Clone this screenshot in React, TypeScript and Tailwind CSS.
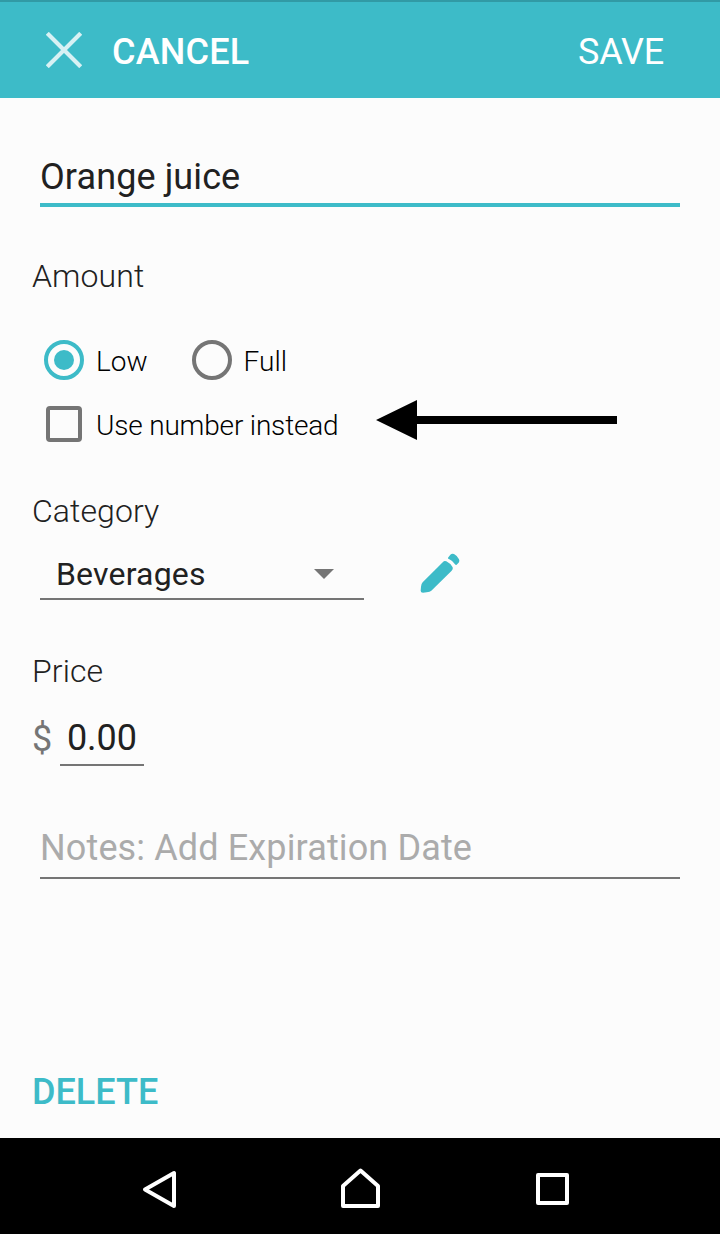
import React, { useState } from 'react';

type Level = 'low' | 'full';

export default function App() {
  const [name, setName] = useState('Orange juice');
  const [level, setLevel] = useState<Level>('low');
  const [useNumber, setUseNumber] = useState(false);
  const [price, setPrice] = useState('0.00');
  const [notes, setNotes] = useState('');

  return (
    <div className="flex h-[1234px] w-[720px] flex-col overflow-hidden bg-[#fcfcfc] font-[Roboto,sans-serif] text-[#212121]">
      <header className="flex h-[98px] shrink-0 items-center border-t-2 border-[#319aa5] bg-[#3dbbc8] pl-[46px] pr-14 text-4xl leading-[40px] text-white">
        <CloseIcon />
        <button className="ml-[30px] mt-[3px] font-medium tracking-[0.2px]">CANCEL</button>
        <button className="ml-auto mt-[3px] tracking-[-0.2px]">SAVE</button>
      </header>

      <main className="flex grow flex-col items-start px-8 pt-[57px]">
        <input
          aria-label="Item name"
          value={name}
          onChange={e => setName(e.target.value)}
          className="mx-2 h-[52px] w-[640px] border-b-4 border-[#3dbbc8] pb-[5px] text-4xl tracking-[0.1px] outline-none"
        />

        <Label className="mt-[49px]">Amount</Label>
        <div className="mt-11 flex items-center gap-11 pl-3">
          <Radio label="Low" checked={level === 'low'} onSelect={() => setLevel('low')} />
          <Radio label="Full" checked={level === 'full'} onSelect={() => setLevel('full')} />
        </div>
        <div className="mt-5 flex h-12 items-center">
          <label className="flex w-[306px] items-center pl-3.5">
            <input type="checkbox" className="sr-only" checked={useNumber} onChange={e => setUseNumber(e.target.checked)} />
            <span className={`size-9 shrink-0 rounded-[4px] border-4 border-[#757575] ${useNumber ? 'bg-[#3dbbc8]' : ''}`} />
            <span className="ml-3.5 whitespace-nowrap pt-[3px] text-[28px] font-light leading-9 tracking-[-0.18px] text-black">Use number instead</span>
          </label>
          <ArrowLeft />
        </div>

        <Label className="mt-[43px]">Category</Label>
        <div className="mt-5 flex items-start">
          <button className="mx-2 flex h-[49px] w-[324px] items-center justify-between border-b-2 border-[#757575] pb-0.5 pl-4 pr-[30px] text-[32px] tracking-[0.18px]">
            Beverages
            <svg width="20" height="10" viewBox="0 0 20 10" fill="#757575"><path d="M0 0h20L10 10z" /></svg>
          </button>
          <PencilIcon />
        </div>

        <Label className="mt-[51px]">Price</Label>
        <div className="mt-6 flex items-start text-4xl leading-[42px]">
          <span className="w-7 pt-[3px] text-[#757575]">$</span>
          <input
            aria-label="Price"
            value={price}
            onChange={e => setPrice(e.target.value)}
            className="h-[51px] w-[84px] border-b-2 border-[#757575] pb-[3px] text-center outline-none"
          />
        </div>

        <input
          aria-label="Notes"
          value={notes}
          onChange={e => setNotes(e.target.value)}
          placeholder="Notes: Add Expiration Date"
          className="mx-2 mt-[61px] h-[52px] w-[640px] border-b-2 border-[#757575] pb-[9px] text-4xl tracking-[0.13px] outline-none placeholder:text-[#ababab]"
        />

        <button className="mb-[26px] mt-auto text-4xl font-medium leading-[40px] text-[#3dbbc8]">DELETE</button>
      </main>

      <nav className="h-24 shrink-0 bg-black">
        <svg width="720" height="96" viewBox="0 0 720 96" fill="none" stroke="#fff" strokeWidth="4" strokeLinejoin="round">
          <path d="M145 51.5L174 35v33z" />
          <path d="M343 48l17.500-15.500L378 48v20h-35z" />
          <path d="M538 37h29v28h-29z" />
        </svg>
      </nav>
    </div>
  );
}

function Label({ children, className }: { children: React.ReactNode; className: string }) {
  return <h2 className={`text-[32px] font-light leading-10 tracking-[0.08px] ${className}`}>{children}</h2>;
}

function Radio({ label, checked, onSelect }: { label: string; checked: boolean; onSelect: () => void }) {
  return (
    <label className="flex h-10 items-center">
      <input type="radio" name="amount" className="sr-only" checked={checked} onChange={onSelect} />
      <span className={`flex size-10 items-center justify-center rounded-full border-4 ${checked ? 'border-[#3dbbc8]' : 'border-[#757575]'}`}>
        {checked && <span className="size-5 rounded-full bg-[#3dbbc8]" />}
      </span>
      <span className="ml-3 pt-[3px] text-[28px] font-light leading-9 text-black">{label}</span>
    </label>
  );
}

function CloseIcon() {
  return (
    <svg width="36" height="36" viewBox="0 0 36 36" stroke="#d8f1f4" strokeWidth="4.2">
      <path d="M1.300 1.300l33.400 33.400M34.700 1.300l-33.400 33.400" />
    </svg>
  );
}

function ArrowLeft() {
  return (
    <svg width="241" height="40" viewBox="0 0 241 40" className="-mt-2 ml-[38px]">
      <path d="M0 20L41 0v16h200v8H41v16z" />
    </svg>
  );
}

function PencilIcon() {
  return (
    <svg width="40" height="40" viewBox="0 0 120 120" className="ml-12 mt-0.5" fill="#3dbbc8">
      <path d="M8 88L69 27Q73 22 79 25Q90 30 98 43Q100 48 95 53L34 113Q30 117 20 118L9 119Q2 119 2 113L3 101Q4 92 8 88z" />
      <path d="M84 14L91 5Q96 0 102 3Q112 8 117 19Q120 25 116 29L109 36Q107 37 105 34Q99 24 88 19Q83 17 84 14z" />
    </svg>
  );
}
